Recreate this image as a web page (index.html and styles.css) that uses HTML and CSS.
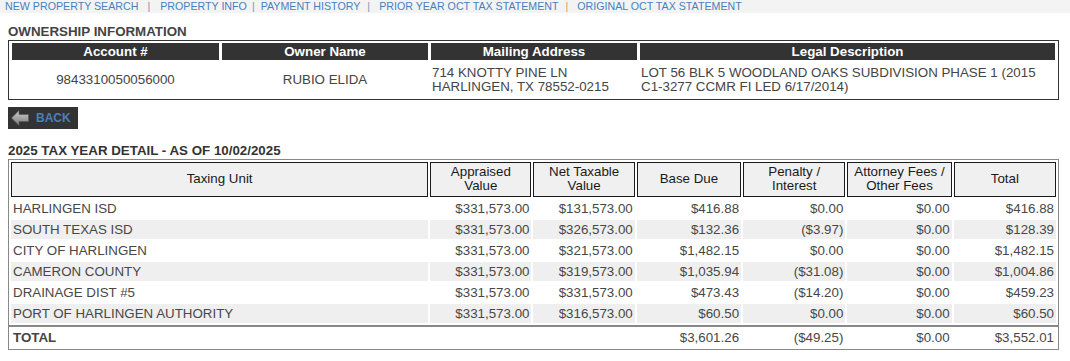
FILE: index.html
```html
<!DOCTYPE html>
<html>
<head>
<meta charset="utf-8">
<title>Tax Statement</title>
<link rel="stylesheet" href="styles.css">
</head>
<body>
<nav class="topnav">
  <a href="#">NEW PROPERTY SEARCH</a><span class="sep wide">|</span><a href="#">PROPERTY INFO</a><span class="sep">|</span><a href="#">PAYMENT HISTORY</a><span class="sep mid">|</span><a href="#">PRIOR YEAR OCT TAX STATEMENT</a><span class="sep mid alt">|</span><a href="#">ORIGINAL OCT TAX STATEMENT</a>
</nav>

<main class="content">
  <h2 class="section-title">OWNERSHIP INFORMATION</h2>
  <table class="owner">
    <thead>
      <tr>
        <th class="c-acct">Account #</th>
        <th class="c-name">Owner Name</th>
        <th class="c-addr">Mailing Address</th>
        <th class="c-legal">Legal Description</th>
      </tr>
    </thead>
    <tbody>
      <tr>
        <td class="center">9843310050056000</td>
        <td class="center">RUBIO ELIDA</td>
        <td>714 KNOTTY PINE LN<br>HARLINGEN, TX 78552-0215</td>
        <td>LOT 56 BLK 5 WOODLAND OAKS SUBDIVISION PHASE 1 (2015 C1-3277 CCMR FI LED 6/17/2014)</td>
      </tr>
    </tbody>
  </table>

  <a href="#" class="back-btn">
    <svg class="back-icon" width="18" height="16" viewBox="0 0 18 16">
      <defs>
        <linearGradient id="ag" x1="0" y1="0" x2="0" y2="1">
          <stop offset="0" stop-color="#cfcfcf"/>
          <stop offset="1" stop-color="#7a7a7a"/>
        </linearGradient>
      </defs>
      <polygon points="0.5,8 8,0.5 8,4.5 17.5,4.5 17.5,11.5 8,11.5 8,15.5" fill="url(#ag)" stroke="#5a5a5a" stroke-width="0.6"/>
    </svg>
    <span>BACK</span>
  </a>

  <h2 class="section-title tax-title">2025 TAX YEAR DETAIL - AS OF 10/02/2025</h2>
  <table class="tax">
    <thead>
      <tr>
        <th class="w-unit">Taxing Unit</th>
        <th class="w-a">Appraised<br>Value</th>
        <th class="w-a">Net Taxable<br>Value</th>
        <th class="w-b">Base Due</th>
        <th class="w-c">Penalty /<br>Interest</th>
        <th class="w-b">Attorney Fees /<br>Other Fees</th>
        <th class="w-c">Total</th>
      </tr>
    </thead>
    <tbody>
      <tr><td>HARLINGEN ISD</td><td>$331,573.00</td><td>$131,573.00</td><td>$416.88</td><td>$0.00</td><td>$0.00</td><td>$416.88</td></tr>
      <tr class="alt"><td>SOUTH TEXAS ISD</td><td>$331,573.00</td><td>$326,573.00</td><td>$132.36</td><td>($3.97)</td><td>$0.00</td><td>$128.39</td></tr>
      <tr><td>CITY OF HARLINGEN</td><td>$331,573.00</td><td>$321,573.00</td><td>$1,482.15</td><td>$0.00</td><td>$0.00</td><td>$1,482.15</td></tr>
      <tr class="alt"><td>CAMERON COUNTY</td><td>$331,573.00</td><td>$319,573.00</td><td>$1,035.94</td><td>($31.08)</td><td>$0.00</td><td>$1,004.86</td></tr>
      <tr><td>DRAINAGE DIST #5</td><td>$331,573.00</td><td>$331,573.00</td><td>$473.43</td><td>($14.20)</td><td>$0.00</td><td>$459.23</td></tr>
      <tr class="alt"><td>PORT OF HARLINGEN AUTHORITY</td><td>$331,573.00</td><td>$316,573.00</td><td>$60.50</td><td>$0.00</td><td>$0.00</td><td>$60.50</td></tr>
      <tr class="rule"><td colspan="7"></td></tr>
      <tr class="total"><td>TOTAL</td><td></td><td></td><td>$3,601.26</td><td>($49.25)</td><td>$0.00</td><td>$3,552.01</td></tr>
    </tbody>
  </table>
</main>
</body>
</html>
```

FILE: styles.css
```css
html, body {
  margin: 0;
  padding: 0;
  background: #ffffff;
  font-family: "Liberation Sans", Arial, sans-serif;
  color: #444444;
}

.topnav {
  background: #f3f3f3;
  height: 13px;
  line-height: 13px;
  font-size: 10.67px;
  padding-left: 5px;
  white-space: nowrap;
}

.topnav a {
  color: #4a7fbf;
  text-decoration: none;
}

.topnav .sep {
  color: #7f8fb0;
  margin: 0 6px 0 5px;
}

.topnav .sep.wide {
  margin: 0 10px 0 9px;
}

.topnav .sep.mid {
  margin: 0 9px 0 7px;
}

.topnav .sep.alt {
  color: #d09a66;
}

.content {
  padding: 0 8px;
}

.section-title {
  margin: 11px 0 1px 0;
  font-size: 13.33px;
  line-height: 15px;
  font-weight: bold;
  color: #444444;
}

.tax-title {
  margin: 15px 0 1px 0;
  line-height: 14px;
  color: #333333;
}

/* Ownership table */
.owner {
  width: 1051px;
  border: 1px solid #333333;
  border-collapse: separate;
  border-spacing: 3px 2px;
  font-size: 13.33px;
  table-layout: fixed;
}

.owner th {
  background: #333333;
  color: #ffffff;
  font-weight: bold;
  line-height: 15px;
  padding: 1px 0;
}

.owner .c-acct { width: 207px; }
.owner .c-name { width: 206px; }
.owner .c-addr { width: 206px; }

.owner td {
  color: #444444;
  line-height: 14px;
  padding: 4px 1px 3px 1px;
  vertical-align: middle;
  text-align: left;
}

.owner td.center {
  text-align: center;
}

/* Back button */
.back-btn {
  margin-top: 7px;
  display: flex;
  align-items: center;
  width: 70px;
  height: 22px;
  box-sizing: border-box;
  padding-left: 3px;
  background: #333333;
  color: #4a7fbf;
  font-size: 12px;
  font-weight: bold;
  text-decoration: none;
}

.back-icon {
  display: block;
  margin-right: 7px;
}

/* Tax table */
.tax {
  width: 1051px;
  border: 1px solid #888888;
  border-collapse: separate;
  border-spacing: 2px 2px;
  font-size: 13.33px;
  table-layout: fixed;
}

.tax th {
  background: #f0f0f0;
  border: 1px solid #1a1a1a;
  color: #1a1a1a;
  font-weight: normal;
  line-height: 14px;
  padding: 2px 2px 3px 2px;
  text-align: center;
  vertical-align: middle;
}

.tax .w-unit { width: 410px; }
.tax .w-a { width: 95px; }
.tax .w-b { width: 98px; }
.tax .w-c { width: 96px; }

.tax td {
  color: #474747;
  line-height: 15px;
  padding: 2px 2px;
  text-align: right;
  white-space: nowrap;
}

.tax td:first-child {
  text-align: left;
}

.tax tr.alt td {
  background: #efefef;
}

.tax tr.rule td {
  height: 2px;
  padding: 0;
  font-size: 0;
  line-height: 0;
  background: #888888;
  box-shadow: -2px 0 0 #888888, 2px 0 0 #888888;
}

.tax tr.total td {
  padding: 1px 2px 2px 2px;
}

.tax tr.total td:first-child {
  font-weight: bold;
  color: #444444;
}
```
